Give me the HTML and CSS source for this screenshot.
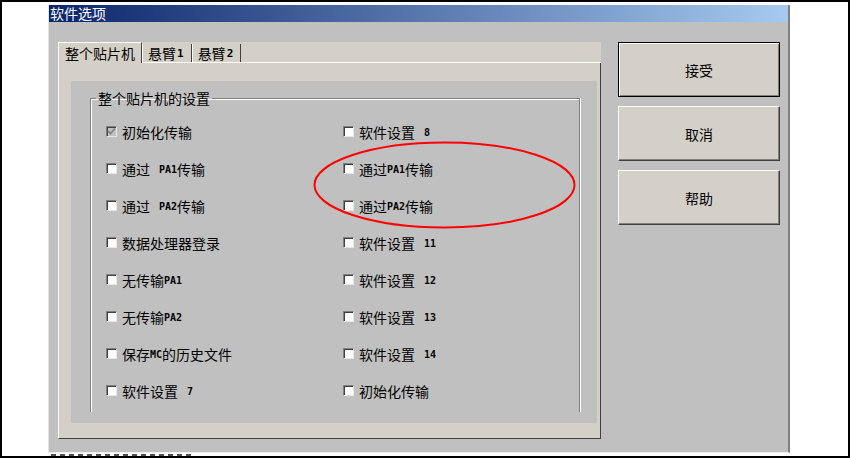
FILE: index.html
```html
<!DOCTYPE html>
<html lang="zh-CN">
<head>
  <meta charset="UTF-8" />
  <title>软件选项</title>
  <link rel="stylesheet" href="styles.css">
</head>
<body>
  <div class="screen">
    <div class="dialog">
      <div class="titlebar">软件选项</div>

      <div class="dialog-body">
        <div class="tabs">
          <div class="tab-strip">
            <span class="tab active">整个贴片机</span>
            <span class="tab">悬臂<b class="num">1</b></span>
            <span class="tab">悬臂<b class="num">2</b></span>
          </div>

          <div class="tab-pane">
            <div class="pane-inner">
              <fieldset class="group">
                <legend>整个贴片机的设置</legend>
                <div class="options">
                  <label class="option"><span class="box checked"><svg viewBox="0 0 9 9" width="9" height="9"><path d="M1 4 L3.5 6.5 L8 1.5" fill="none" stroke="#808080" stroke-width="1.6"/></svg></span>初始化传输</label>
                  <label class="option"><span class="box"></span>通过<b class="num gap">PA1</b>传输</label>
                  <label class="option"><span class="box"></span>通过<b class="num gap">PA2</b>传输</label>
                  <label class="option"><span class="box"></span>数据处理器登录</label>
                  <label class="option"><span class="box"></span>无传输<b class="num">PA1</b></label>
                  <label class="option"><span class="box"></span>无传输<b class="num">PA2</b></label>
                  <label class="option"><span class="box"></span>保存<b class="num">MC</b>的历史文件</label>
                  <label class="option"><span class="box"></span>软件设置<b class="num gap">7</b></label>

                  <label class="option"><span class="box"></span>软件设置<b class="num gap">8</b></label>
                  <label class="option"><span class="box"></span>通过<b class="num">PA1</b>传输</label>
                  <label class="option"><span class="box"></span>通过<b class="num">PA2</b>传输</label>
                  <label class="option"><span class="box"></span>软件设置<b class="num gap">11</b></label>
                  <label class="option"><span class="box"></span>软件设置<b class="num gap">12</b></label>
                  <label class="option"><span class="box"></span>软件设置<b class="num gap">13</b></label>
                  <label class="option"><span class="box"></span>软件设置<b class="num gap">14</b></label>
                  <label class="option"><span class="box"></span>初始化传输</label>
                </div>
              </fieldset>
            </div>
          </div>
        </div>

        <div class="buttons">
          <div class="btn default">接受</div>
          <div class="btn">取消</div>
          <div class="btn">帮助</div>
        </div>
      </div>
    </div>
    <div class="cut-line"></div>

    <!-- red marker ellipse drawn over the screenshot -->
    <svg class="marker" width="850" height="458" viewBox="0 0 850 458">
      <ellipse cx="444.5" cy="185" rx="130" ry="42.5" fill="none" stroke="#f00" stroke-width="2"/>
    </svg>
  </div>
</body>
</html>
```

FILE: styles.css
```css
html, body {
  margin: 0;
  padding: 0;
  background: #fff;
}

.screen {
  position: relative;
  width: 850px;
  height: 458px;
  box-sizing: border-box;
  border: 2px solid #000;
  background: #fff;
  overflow: hidden;
  font-family: "Noto Sans CJK SC", "Liberation Sans", sans-serif;
  font-size: 14px;
  color: #000;
}

.dialog {
  margin: 3px 0 0 46px;
  width: 742px;
  height: 448px;
  box-sizing: border-box;
  background: #c0c0c0;
  border-left: 1px solid #e4e4e4;
  border-right: 2px solid #808080;
  border-bottom: 1px solid #f0f0f0;
}

.titlebar {
  height: 17px;
  line-height: 17px;
  padding-left: 1px;
  color: #fff;
  font-size: 14px;
  background: linear-gradient(90deg, #0a246a, #a6caf0);
}

.dialog-body {
  display: flex;
  gap: 17px;
  padding: 20px 0 0 9px;
}

/* tabs */
.tabs {
  width: 543px;
}

.tab-strip {
  display: flex;
  align-items: flex-end;
  height: 20px;
  background: #d4d0c8;
  border-bottom: 1px solid #fff;
}

.tab {
  display: flex;
  align-items: center;
  height: 18px;
  padding: 0 7px 0 5px;
  border-left: 1px solid #fff;
  border-right: 1px solid #404040;
  background: #d4d0c8;
}

.tab.active {
  position: relative;
  height: 20px;
  margin-bottom: -1px;
  padding: 0 6px;
  border-top: 1px solid #fff;
}

.tab .num {
  font-size: 11px;
  margin-left: 1px;
}

.tab-pane {
  height: 376px;
  box-sizing: border-box;
  padding: 18px 3px 16px 12px;
  background: #d4d0c8;
  border-left: 1px solid #fff;
  border-right: 1px solid #404040;
  border-bottom: 1px solid #404040;
}

.pane-inner {
  height: 342px;
  box-sizing: border-box;
  padding: 9px 17px 0 19px;
  background: #c0c0c0;
}

.group {
  margin: 0;
  padding: 0;
  height: 322px;
  box-sizing: border-box;
  border: 1px solid #808080;
  border-bottom: none;
  box-shadow: inset 1px 1px 0 #fff, 1px 0 0 #fff;
}

.group legend {
  margin-left: 5px;
  padding: 0 2px;
  line-height: 16px;
  font-size: 14px;
}

.options {
  display: grid;
  grid-template-columns: 237px 1fr;
  grid-template-rows: repeat(8, 37px);
  grid-auto-flow: column;
  padding: 7px 0 0 15px;
}

.option {
  display: flex;
  align-items: center;
  white-space: nowrap;
  line-height: 16px;
}

.box {
  display: flex;
  align-items: center;
  justify-content: center;
  width: 11px;
  height: 11px;
  margin-right: 5px;
  box-sizing: border-box;
  background: #fff;
  border: 1px solid;
  border-color: #808080 #e8e8e8 #e8e8e8 #808080;
  box-shadow: inset 1px 1px 0 #404040;
}

.box.checked {
  background: #c0c0c0;
}

.num {
  font-family: "DejaVu Sans Mono", "Liberation Mono", monospace;
  font-weight: bold;
  font-size: 10px;
  line-height: 10px;
  padding-top: 2px;
}

.num.gap {
  margin-left: 9px;
}

/* buttons */
.buttons {
  display: flex;
  flex-direction: column;
  gap: 9px;
  width: 162px;
}

.btn {
  display: flex;
  align-items: center;
  justify-content: center;
  height: 55px;
  box-sizing: border-box;
  background: #d4d0c8;
  border: 1px solid;
  border-color: #fff #404040 #404040 #fff;
  box-shadow: inset -1px -1px 0 #808080;
  font-size: 14px;
}

.btn.default {
  border-color: #000;
  box-shadow: inset 1px 1px 0 #fff, inset -1px -1px 0 #808080;
}

/* top edge of the next, cut-off row below the dialog */
.cut-line {
  margin: 1px 0 0 49px;
  width: 140px;
  height: 2px;
  background: repeating-linear-gradient(90deg, #505050 0 5px, transparent 5px 9px);
}

.marker {
  position: absolute;
  top: -2px;
  left: -2px;
  pointer-events: none;
}
```
